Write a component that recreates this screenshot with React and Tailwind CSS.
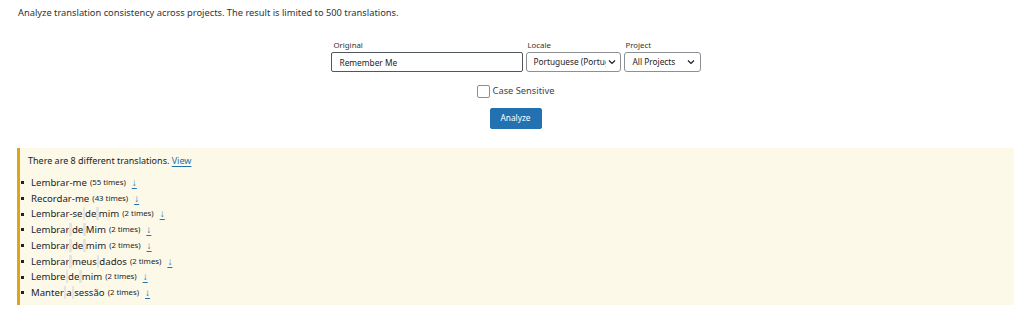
import { useState } from 'react';

const results = [
  { text: 'Lembrar-me', count: 55 },
  { text: 'Recordar-me', count: 43 },
  { text: 'Lembrar-se de mim', count: 2 },
  { text: 'Lembrar de Mim', count: 2 },
  { text: 'Lembrar de mim', count: 2 },
  { text: 'Lembrar meus dados', count: 2 },
  { text: 'Lembre de mim', count: 2 },
  { text: 'Manter a sessão', count: 2 },
];

function Chevron() {
  return (
    <svg width="8" height="8" viewBox="0 0 8 8" className="shrink-0">
      <path d="M1 2.5 L4 5.5 L7 2.5" fill="none" stroke="#1e1e1e" strokeWidth="1.2" />
    </svg>
  );
}

// spaces in a translation are shown with a faint marker
function Marked({ text }) {
  const parts = text.split(' ');
  return parts.map((p, i) => (
    <span key={i}>
      {p}
      {i < parts.length - 1 && <span className="bg-[#e4e4e4]"> </span>}
    </span>
  ));
}

export default function App() {
  const [original, setOriginal] = useState('Remember Me');
  const [caseSensitive, setCaseSensitive] = useState(false);

  return (
    <div className="w-[1024px] h-[309px] bg-white text-[#1d2327] font-['Noto_Sans',sans-serif] pl-[18px] pr-[10px] pt-[6px] overflow-hidden">
      <p className="text-[9.3px] leading-[14px] text-[#2c3338]">
        Analyze translation consistency across projects. The result is limited to 500 translations.
      </p>

      <form className="mt-[20px] flex flex-col items-center -ml-[1px]" onSubmit={e => e.preventDefault()}>
        <div className="flex gap-[3px]">
          <label className="flex flex-col w-[192px]">
            <span className="text-[7.8px] leading-[10px] pl-[3px] mb-[2px] text-[#2c3338]">Original</span>
            <input
              value={original}
              onChange={e => setOriginal(e.target.value)}
              className="h-[20px] border border-[#50575e] rounded-[2px] px-[8px] text-[8.3px] outline-none"
            />
          </label>
          <label className="flex flex-col w-[95px]">
            <span className="text-[7.8px] leading-[10px] pl-[2px] mb-[2px] text-[#2c3338]">Locale</span>
            <div className="h-[20px] border border-[#8c8f94] rounded-[3px] pl-[7px] pr-[4px] flex items-center gap-[2px] text-[8.3px]">
              <span className="overflow-hidden whitespace-nowrap flex-1">Portuguese (Portugal)</span>
              <Chevron />
            </div>
          </label>
          <label className="flex flex-col w-[77px]">
            <span className="text-[7.8px] leading-[10px] pl-[2px] mb-[2px] text-[#2c3338]">Project</span>
            <div className="h-[20px] border border-[#8c8f94] rounded-[3px] pl-[8px] pr-[5px] flex items-center justify-between text-[8.3px]">
              <span className="whitespace-nowrap">All Projects</span>
              <Chevron />
            </div>
          </label>
        </div>

        <label className="mt-[12px] flex items-center gap-[3px] text-[9.3px] leading-[14px] text-[#3c434a]">
          <span
            onClick={() => setCaseSensitive(!caseSensitive)}
            className="w-[13px] h-[13px] border border-[#8c8f94] rounded-[2px] bg-white"
          />
          Case Sensitive
        </label>

        <button className="mt-[10px] w-[52px] h-[21px] bg-[#2271b1] border border-[#2271b1] rounded-[2px] text-white text-[8.3px]">
          Analyze
        </button>
      </form>

      <div className="mt-[19px] w-[997px] -ml-[1px] h-[157px] bg-[#fcf9e8] border-l-[3px] border-[#dba617] pt-[5px]">
        <p className="text-[9px] leading-[16px] pl-[8px]">
          There are 8 different translations.{' '}
          <a href="#" className="text-[#2271b1] underline underline-offset-2">View</a>
        </p>
        <ul className="mt-[6px] text-[9.6px] leading-[15.7px]">
          {results.map(r => (
            <li key={r.text} className="flex items-center">
              <span className="w-[3px] h-[3px] bg-[#1d2327] ml-[1px] mr-[7px]" />
              <span className="whitespace-pre"><Marked text={r.text} /></span>
              <span className="text-[7.8px] ml-[3px]">({r.count} times)</span>
              <a href="#" className="ml-[6px] text-[#2271b1] underline underline-offset-2 text-[10px]">↓</a>
            </li>
          ))}
        </ul>
      </div>
    </div>
  );
}
